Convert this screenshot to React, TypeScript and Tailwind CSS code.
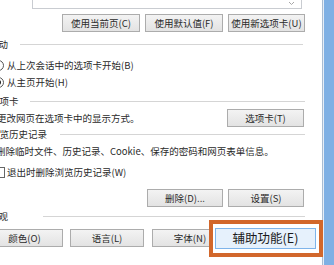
import React from 'react'

const btn =
  'flex items-center justify-center h-[18px] border border-[#acacac] bg-gradient-to-b from-[#f3f3f3] to-[#e3e3e3] text-[9.5px] text-[#2a2a2a]'

const txt = 'text-[9.5px] text-[#2a2a2a] whitespace-nowrap'

function Header({ label, pad, line }: { label: string; pad: string; line: string }) {
  return (
    <div className="flex items-center h-[14px]">
      <span className={`${pad} shrink-0 ${txt}`}>{label}</span>
      <div className={`${line} h-px bg-[#d5d5d5]`} />
    </div>
  )
}

export default function App() {
  return (
    <div className="relative flex w-[334px] h-[265px] overflow-hidden bg-white font-['Noto_Sans_CJK_SC',sans-serif]">
      <div className="flex flex-col w-[322px] shrink-0 overflow-hidden">
        {/* home page box (bottom part) */}
        <div className="relative ml-[32px] w-[270px] h-[9px] shrink-0 border-x border-b border-[#c9ccd1]">
          <svg className="absolute right-[6px] top-[1px]" width="7" height="5" viewBox="0 0 7 5">
            <path d="M1 1l2.5 2.5L6 1" fill="none" stroke="#a8a8a8" strokeWidth="1" />
          </svg>
        </div>

        <div className="flex gap-[5px] ml-[62px] mt-[5px]">
          <div className={`${btn} w-[78px]`}>使用当前页(C)</div>
          <div className={`${btn} w-[78px]`}>使用默认值(F)</div>
          <div className={`${btn} w-[77px]`}>使用新选项卡(U)</div>
        </div>

        {/* startup */}
        <div className="mt-[5px]">
          <Header label="启动" pad="-ml-[11px] w-[31px]" line="w-[283px]" />
        </div>
        <div className="flex items-center h-[17px] mt-[6px]">
          <span className="-ml-[7px] w-[11px] h-[11px] rounded-full border border-[#555] bg-white" />
          <span className={`ml-[3px] ${txt}`}>从上次会话中的选项卡开始(B)</span>
        </div>
        <div className="flex items-center h-[17px]">
          <span className="-ml-[7px] w-[11px] h-[11px] rounded-full border border-[#555] bg-white flex items-center justify-center">
            <span className="w-[5px] h-[5px] rounded-full bg-[#222]" />
          </span>
          <span className={`ml-[3px] ${txt}`}>从主页开始(H)</span>
        </div>

        {/* tabs */}
        <div className="mt-[3px]">
          <Header label="选项卡" pad="-ml-[10px] w-[40px]" line="w-[275px]" />
        </div>
        <div className="flex items-center h-[18px] mt-[1px]">
          <span className={`-ml-[3px] ${txt}`}>更改网页在选项卡中的显示方式。</span>
          <div className={`${btn} w-[77px] ml-auto mr-[18px]`}>选项卡(T)</div>
        </div>

        {/* browsing history */}
        <Header label="浏览历史记录" pad="-ml-[10px] w-[70px]" line="w-[245px]" />
        <div className="flex items-center h-[16px] mt-[2px]">
          <span className={`-ml-[4px] ${txt}`}>
            删除临时文件、历史记录、Cookie、保存的密码和网页表单信息。
          </span>
        </div>
        <div className="flex items-center h-[16px] mt-[5px]">
          <span className="-ml-[6px] w-[11px] h-[11px] border border-[#666] bg-white" />
          <span className={`ml-[2px] ${txt}`}>退出时删除浏览历史记录(W)</span>
        </div>
        <div className="flex gap-[5px] ml-[147px] mt-[9px]">
          <div className={`${btn} w-[76px]`}>删除(D)...</div>
          <div className={`${btn} w-[76px]`}>设置(S)</div>
        </div>

        {/* appearance */}
        <div className="mt-[2px]">
          <Header label="外观" pad="-ml-[11px] w-[54px]" line="w-[262px]" />
        </div>
        <div className="flex mt-[6px] -ml-[14px]">
          <div className={`${btn} w-[77px] shrink-0`}>颜色(O)</div>
          <div className={`${btn} w-[74px] shrink-0 ml-[7px]`}>语言(L)</div>
          <div className={`${btn} w-[76px] shrink-0 ml-[8px]`}>字体(N)</div>
        </div>
      </div>

      {/* window frame */}
      <div className="w-px shrink-0 bg-[#a9bcd2]" />
      <div className="w-px shrink-0 bg-[#e6eef7]" />
      <div className="flex-1 bg-[#7fb0e4]" />

      {/* highlight annotation */}
      <div className="absolute left-[209px] top-[220px] w-[114px] h-[37px] border-[4px] border-[#d2672b] bg-white" />
      <div className="absolute left-[215px] top-[228px] w-[101px] h-[21px] flex items-center justify-center border border-[#7eb4ea] bg-[#e6f1fc] text-[12.5px] text-[#1a1a1a]">
        辅助功能(E)
      </div>
    </div>
  )
}
